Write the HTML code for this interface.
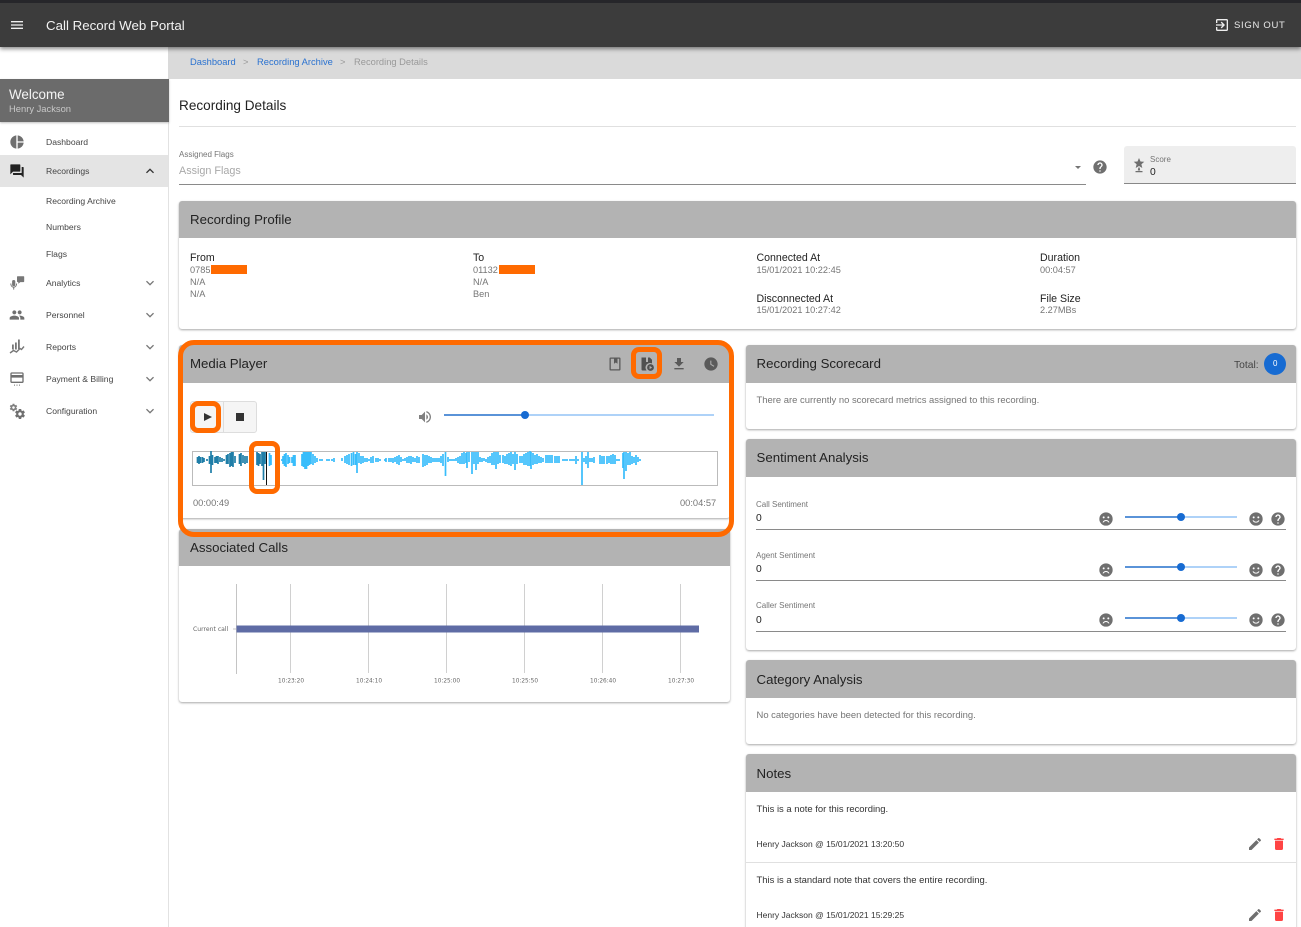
<!DOCTYPE html>
<html><head><meta charset="utf-8"><title>Call Record Web Portal</title>
<style>
html,body{margin:0;padding:0;background:#fff}
#p{position:relative;width:1301px;height:927px;overflow:hidden;background:#fff;font-family:"Liberation Sans",sans-serif;color:#222}
#p div{position:absolute}
.t{position:absolute;white-space:nowrap;line-height:1}
.h{left:0;right:0;background:#b3b3b3;height:38px;border-radius:3px 3px 0 0}
.c{background:#fff;border-radius:3px;box-shadow:0 1px 2px rgba(0,0,0,.35)}
.ht{font-size:13.250px;color:#222}
.nav{font-size:8.600px;color:#444;left:46px}
.g{font-size:9.200px;color:#757575}
.m{font-size:9.450px;color:#757575}
.k{font-size:10.600px;color:#222}
.n{font-size:9.450px;color:#333}
.u{font-size:8.500px;color:#333}
.l{font-size:8px;color:#757575}
.b{font-size:9.350px}
svg.i{position:absolute;fill:#6f6f6f}
.o{border:5px solid #ff6a00;box-sizing:border-box;background:transparent}
</style></head><body><div id="p">
<svg width="0" height="0" style="position:absolute">
<defs>
<symbol id="menu" viewBox="0 0 24 24"><path d="M3 18h18v-2H3v2zm0-5h18v-2H3v2zm0-7v2h18V6H3z"/></symbol>
<symbol id="pie" viewBox="0 0 24 24"><path d="M11 2v20c-5.070-.5-9-4.790-9-10s3.930-9.500 9-10zm2.030 0v8.990H22c-.47-4.740-4.240-8.520-8.970-8.990zm0 11.010V22c4.740-.47 8.500-4.250 8.970-8.990h-8.970z"/></symbol>
<symbol id="forum" viewBox="0 0 24 24"><path d="M21 6h-2v9H6v2c0 .55.45 1 1 1h11l4 4V7c0-.55-.45-1-1-1zm-4 6V3c0-.55-.45-1-1-1H3c-.55 0-1 .45-1 1v14l4-4h10c.55 0 1-.45 1-1z"/></symbol>
<symbol id="less" viewBox="0 0 24 24"><path d="M12 8l-6 6 1.410 1.410L12 10.830l4.590 4.580L18 14z"/></symbol>
<symbol id="more" viewBox="0 0 24 24"><path d="M16.590 8.590L12 13.170 7.410 8.590 6 10l6 6 6-6z"/></symbol>
<symbol id="people" viewBox="0 0 24 24"><path d="M16 11c1.660 0 2.990-1.340 2.990-3S17.660 5 16 5c-1.660 0-3 1.340-3 3s1.340 3 3 3zm-8 0c1.660 0 2.990-1.340 2.990-3S9.660 5 8 5C6.340 5 5 6.340 5 8s1.340 3 3 3zm0 2c-2.330 0-7 1.170-7 3.500V19h14v-2.500c0-2.330-4.670-3.500-7-3.500zm8 0c-.29 0-.62.02-.97.05 1.160.84 1.970 1.970 1.970 3.450V19h6v-2.500c0-2.330-4.670-3.500-7-3.500z"/></symbol>
<symbol id="exit" viewBox="0 0 24 24"><path d="M10.090 15.590L11.500 17l5-5-5-5-1.410 1.410L12.670 11H3v2h9.670l-2.580 2.590zM19 3H5c-1.110 0-2 .9-2 2v4h2V5h14v14H5v-4H3v4c0 1.100.89 2 2 2h14c1.100 0 2-.9 2-2V5c0-1.100-.9-2-2-2z"/></symbol>
<symbol id="help" viewBox="0 0 24 24"><path d="M12 2C6.480 2 2 6.480 2 12s4.480 10 10 10 10-4.480 10-10S17.520 2 12 2zm1 17h-2v-2h2v2zm2.070-7.750l-.9.920C13.450 12.900 13 13.500 13 15h-2v-.5c0-1.100.45-2.100 1.170-2.830l1.240-1.260c.37-.36.59-.86.59-1.410 0-1.100-.9-2-2-2s-2 .9-2 2H8c0-2.210 1.790-4 4-4s4 1.790 4 4c0 .88-.36 1.680-.93 2.250z"/></symbol>
<symbol id="dl" viewBox="0 0 24 24"><path d="M19 9h-4V3H9v6H5l7 7 7-7zM5 18v2h14v-2H5z"/></symbol>
<symbol id="clock" viewBox="0 0 24 24"><path d="M12 2C6.500 2 2 6.500 2 12s4.500 10 10 10 10-4.500 10-10S17.500 2 12 2zm4.200 14.200L11 13V7h1.500v5.200l4.500 2.700-.8 1.300z"/></symbol>
<symbol id="vol" viewBox="0 0 24 24"><path d="M3 9v6h4l5 5V4L7 9H3zm13.500 3c0-1.770-1.020-3.290-2.500-4.030v8.050c1.480-.73 2.500-2.250 2.500-4.020zM14 3.230v2.060c2.890.86 5 3.540 5 6.710s-2.110 5.850-5 6.710v2.060c4.010-.91 7-4.490 7-8.770s-2.990-7.860-7-8.770z"/></symbol>
<symbol id="del" viewBox="0 0 24 24"><path d="M6 19c0 1.100.9 2 2 2h8c1.100 0 2-.9 2-2V7H6v12zM19 4h-3.500l-1-1h-5l-1 1H5v2h14V4z"/></symbol>
<symbol id="edit" viewBox="0 0 24 24"><path d="M3 17.250V21h3.750L17.810 9.940l-3.750-3.750L3 17.250zM20.710 7.040c.39-.39.39-1.020 0-1.410l-2.340-2.340c-.39-.39-1.020-.39-1.410 0l-1.830 1.830 3.750 3.750 1.830-1.830z"/></symbol>
<symbol id="card" viewBox="0 0 24 24"><path d="M20 2H4c-1.110 0-1.990.89-1.990 2L2 16c0 1.110.89 2 2 2h16c1.110 0 2-.89 2-2V4c0-1.110-.89-2-2-2zm0 14H4v-6h16v6zm0-10H4V4h16v2zM7.500 20.500H9V22H7.500zm3.750 0h1.500V22h-1.500zm3.750 0h1.500V22H15z"/></symbol>
<symbol id="gear" viewBox="0 0 24 24"><path d="M19.430 12.980c.04-.32.07-.64.07-.98s-.03-.66-.07-.98l2.110-1.650c.19-.15.24-.42.12-.64l-2-3.460c-.12-.22-.39-.3-.61-.22l-2.490 1c-.52-.4-1.080-.73-1.690-.98l-.38-2.650C14.460 2.180 14.250 2 14 2h-4c-.25 0-.46.18-.49.42l-.38 2.650c-.61.25-1.170.59-1.690.98l-2.490-1c-.23-.09-.49 0-.61.22l-2 3.460c-.13.22-.07.49.12.64l2.110 1.650c-.04.32-.07.65-.07.98s.03.66.07.98l-2.110 1.650c-.19.15-.24.42-.12.64l2 3.460c.12.22.39.3.61.22l2.490-1c.52.4 1.080.73 1.690.98l.38 2.650c.03.24.24.42.49.42h4c.25 0 .46-.18.49-.42l.38-2.650c.61-.25 1.170-.59 1.690-.98l2.490 1c.23.09.49 0 .61-.22l2-3.460c.12-.22.07-.49-.12-.64l-2.110-1.650zM12 15.500c-1.930 0-3.500-1.570-3.500-3.500s1.570-3.500 3.500-3.500 3.500 1.570 3.500 3.500-1.570 3.500-3.500 3.500z"/></symbol>
<symbol id="sad" viewBox="0 0 24 24"><path fill-rule="evenodd" d="M12 2a10 10 0 1 0 0 20 10 10 0 0 0 0-20zM8.500 8a1.500 1.500 0 1 1 0 3 1.500 1.500 0 0 1 0-3zm7 0a1.500 1.500 0 1 1 0 3 1.500 1.500 0 0 1 0-3zM12 13.500c2.300 0 4.300 1.300 5.200 3.500h-1.700c-.8-1.200-2-2-3.500-2s-2.700.8-3.500 2H6.800c.9-2.200 2.900-3.500 5.200-3.500z"/></symbol>
<symbol id="happy" viewBox="0 0 24 24"><path fill-rule="evenodd" d="M12 2a10 10 0 1 0 0 20 10 10 0 0 0 0-20zM8.500 8a1.500 1.500 0 1 1 0 3 1.500 1.500 0 0 1 0-3zm7 0a1.500 1.500 0 1 1 0 3 1.500 1.500 0 0 1 0-3zM12 17.500c-2.300 0-4.300-1.300-5.200-3.500h1.700c.8 1.200 2 2 3.500 2s2.700-.8 3.500-2h1.700c-.9 2.200-2.900 3.500-5.200 3.500z"/></symbol>
</defs></svg>

<!-- app bar -->
<div style="left:0;top:0;width:1301px;height:47px;background:#3c3c3c;box-shadow:0 2px 4px rgba(0,0,0,.45);z-index:5"></div>
<div style="left:0;top:0;width:1301px;height:3px;background:#26262a;z-index:5"></div>
<svg class="i" style="left:9px;top:17px;fill:#eee;z-index:6" width="16" height="16"><use href="#menu"/></svg>
<span class="t" style="left:46px;top:19px;font-size:13.300px;color:#f2f2f2;z-index:6">Call Record Web Portal</span>
<svg class="i" style="left:1214px;top:17px;fill:#eee;z-index:6" width="16" height="16"><use href="#exit"/></svg>
<span class="t" style="left:1234px;top:21px;font-size:9.500px;letter-spacing:.7px;color:#e8e8e8;z-index:6">SIGN OUT</span>

<!-- breadcrumb -->
<div style="left:168px;top:47px;width:1133px;height:32px;background:#dadada"></div>
<span class="t b" style="left:190px;top:58px;color:#2a72d0">Dashboard</span>
<span class="t b" style="left:243px;top:58px;color:#999">&gt;</span>
<span class="t b" style="left:257px;top:58px;color:#2a72d0">Recording Archive</span>
<span class="t b" style="left:340px;top:58px;color:#999">&gt;</span>
<span class="t b" style="left:354px;top:58px;color:#999">Recording Details</span>

<!-- sidebar -->
<div style="left:168px;top:79px;width:1px;height:848px;background:#e2e2e2"></div>
<div style="left:0;top:79px;width:169px;height:43px;background:#6b6b6b;box-shadow:0 1px 2px rgba(0,0,0,.25)"></div>
<span class="t" style="left:9px;top:88px;font-size:13.400px;color:#f4f4f4">Welcome</span>
<span class="t" style="left:9px;top:104px;font-size:9.400px;color:#c8c8c8">Henry Jackson</span>
<div style="left:0;top:155px;width:168px;height:32px;background:#e4e4e4"></div>
<svg class="i" style="left:9px;top:134px" width="16" height="16"><use href="#pie"/></svg>
<svg class="i" style="left:9px;top:163px;fill:#222" width="16" height="16"><use href="#forum"/></svg>
<span class="t nav" style="top:138px">Dashboard</span>
<span class="t nav" style="top:167px">Recordings</span>
<svg class="i" style="left:142px;top:163px;fill:#333" width="16" height="16"><use href="#less"/></svg>
<span class="t nav" style="top:197px">Recording Archive</span>
<span class="t nav" style="top:223px">Numbers</span>
<span class="t nav" style="top:250px">Flags</span>
<span class="t nav" style="top:279px">Analytics</span>
<span class="t nav" style="top:311px">Personnel</span>
<span class="t nav" style="top:343px">Reports</span>
<span class="t nav" style="top:375px">Payment &amp; Billing</span>
<span class="t nav" style="top:407px">Configuration</span>
<svg class="i" style="left:142px;top:275px;fill:#777" width="16" height="16"><use href="#more"/></svg>
<svg class="i" style="left:142px;top:307px;fill:#777" width="16" height="16"><use href="#more"/></svg>
<svg class="i" style="left:142px;top:339px;fill:#777" width="16" height="16"><use href="#more"/></svg>
<svg class="i" style="left:142px;top:371px;fill:#777" width="16" height="16"><use href="#more"/></svg>
<svg class="i" style="left:142px;top:403px;fill:#777" width="16" height="16"><use href="#more"/></svg>
<!-- analytics icon -->
<svg class="i" style="left:9px;top:275px;fill:#777" width="16" height="16" viewBox="0 0 16 16"><rect x="3.100" y="5" width="3.200" height="6.200" rx="1.600"/><path d="M1.800 8.500c0 2.300 1.300 3.700 2.900 3.700s2.900-1.400 2.900-3.700" fill="none" stroke="#777" stroke-width="1"/><path d="M4.200 12v2.600h1V12z"/><path d="M8.700 1.200h5.800a.7.7 0 0 1 .7.7v4.500a.7.7 0 0 1-.7.7h-3.200l-2 1.600V7.100h-.6a.7.7 0 0 1-.7-.7V1.900a.7.7 0 0 1 .7-.7z"/></svg>
<svg class="i" style="left:9px;top:307px" width="16" height="16"><use href="#people"/></svg>
<!-- reports icon -->
<svg class="i" style="left:9px;top:339px;fill:#777" width="16" height="16" viewBox="0 0 16 16"><rect x="3" y="5.500" width="1.800" height="5"/><rect x="6" y="3.500" width="1.800" height="7"/><rect x="9" y=".5" width="1.800" height="9.500"/><path d="M1 14l3.500-2.500 3 1.500 3.500-3.500 1.500 1 2.500-3" fill="none" stroke="#777" stroke-width="1.400"/></svg>
<svg class="i" style="left:9px;top:371px" width="16" height="16"><use href="#card"/></svg>
<svg class="i" style="left:9px;top:403px;fill:#808080" width="9" height="9"><use href="#gear"/></svg>
<svg class="i" style="left:14px;top:408px" width="12" height="12"><use href="#gear"/></svg>

<!-- title -->
<span class="t" style="left:179px;top:99px;font-size:13.600px;color:#222">Recording Details</span>
<div style="left:179px;top:126px;width:1117px;height:1px;background:#e0e0e0"></div>

<!-- flags -->
<span class="t l" style="left:179px;top:151px">Assigned Flags</span>
<span class="t" style="left:179px;top:165.500px;font-size:10.800px;color:#a8a8a8">Assign Flags</span>
<div style="left:179px;top:184px;width:907px;height:1px;background:#8a8a8a"></div>
<div style="left:1075px;top:166px;width:0;height:0;border-left:3px solid transparent;border-right:3px solid transparent;border-top:3px solid #757575"></div>
<svg class="i" style="left:1092px;top:159px" width="16" height="16"><use href="#help"/></svg>
<div style="left:1124px;top:146px;width:172px;height:37px;background:#eee;border-bottom:1px solid #888;border-radius:3px 3px 0 0"></div>
<svg class="i" style="left:1133px;top:158px" width="12" height="15" viewBox="0 0 12 15"><path d="M6 0l1.500 3.500 3.800.3-2.900 2.500.9 3.700L6 8 2.700 10l.9-3.700L.7 3.800l3.800-.3z"/><path d="M5.400 9.500h1.200l.6 3H4.800zM2.500 13h7v1.200h-7z"/></svg>
<span class="t l" style="left:1150px;top:155.500px">Score</span>
<span class="t" style="left:1150px;top:167.500px;font-size:10.300px;color:#222">0</span>

<!-- recording profile -->
<div class="c" style="left:179px;top:201px;width:1117px;height:128px"><div class="h" style="top:0;height:37px"></div></div>
<span class="t ht" style="left:190px;top:213px">Recording Profile</span>
<span class="t k" style="left:190px;top:253px">From</span>
<span class="t g" style="left:190px;top:266px">0785</span>
<div style="left:211px;top:265px;width:36px;height:9px;background:#ff6a00"></div>
<span class="t g" style="left:190px;top:278px">N/A</span>
<span class="t g" style="left:190px;top:290px">N/A</span>
<span class="t k" style="left:473px;top:253px">To</span>
<span class="t g" style="left:473px;top:266px">01132</span>
<div style="left:499px;top:265px;width:36px;height:9px;background:#ff6a00"></div>
<span class="t g" style="left:473px;top:278px">N/A</span>
<span class="t g" style="left:473px;top:290px">Ben</span>
<span class="t k" style="left:756.500px;top:253px">Connected At</span>
<span class="t g" style="left:756.500px;top:266px">15/01/2021 10:22:45</span>
<span class="t k" style="left:756.500px;top:294px">Disconnected At</span>
<span class="t g" style="left:756.500px;top:306px">15/01/2021 10:27:42</span>
<span class="t k" style="left:1040px;top:253px">Duration</span>
<span class="t g" style="left:1040px;top:266px">00:04:57</span>
<span class="t k" style="left:1040px;top:294px">File Size</span>
<span class="t g" style="left:1040px;top:306px">2.27MBs</span>

<!-- media player -->
<div class="c" style="left:179px;top:345px;width:551px;height:173px"><div class="h" style="top:0"></div></div>
<span class="t ht" style="left:190px;top:357px">Media Player</span>
<svg class="i" style="left:607px;top:356px;fill:#5a5a5a" width="16" height="16" viewBox="0 0 16 16"><path fill-rule="evenodd" d="M3.500 1.500h9a1 1 0 0 1 1 1v11a1 1 0 0 1-1 1h-9a1 1 0 0 1-1-1v-11a1 1 0 0 1 1-1zm.3 1.200v10.600h8.400V2.700H10.500v5L8.800 6.500 7 7.700v-5z"/></svg>
<svg class="i" style="left:639px;top:356px;fill:#505050" width="16" height="16" viewBox="0 0 16 16"><path d="M2.500 1.500H7v4.500h2V1.500h1.800L13 3.700V7.500A4.500 4.500 0 0 0 7.600 14.500H3.500a1 1 0 0 1-1-1z"/><circle cx="11.500" cy="11.500" r="3.400"/><path d="M10.600 9.900l2.500 1.600-2.500 1.600z" fill="#b3b3b3"/></svg>
<svg class="i" style="left:671px;top:356px;fill:#5a5a5a" width="16" height="16"><use href="#dl"/></svg>
<svg class="i" style="left:703px;top:356px;fill:#5a5a5a" width="16" height="16"><use href="#clock"/></svg>

<div style="left:190px;top:401px;width:65px;height:30px;background:#f5f5f5;border:1px solid #ddd;border-radius:3px"></div>
<div style="left:223px;top:402px;width:1px;height:30px;background:#ddd"></div>
<div style="left:204px;top:413px;width:0;height:0;border-left:8px solid #333;border-top:4.500px solid transparent;border-bottom:4.500px solid transparent"></div>
<div style="left:236px;top:413px;width:8px;height:8px;background:#333"></div>
<svg class="i" style="left:417px;top:409px;fill:#808080" width="16" height="16"><use href="#vol"/></svg>
<div style="left:444px;top:414px;width:81px;height:1.500px;background:#5a93d8"></div>
<div style="left:525px;top:414px;width:189px;height:1.500px;background:#aed2f8"></div>
<div style="left:521px;top:411px;width:8px;height:8px;border-radius:50%;background:#176bd2"></div>

<div style="left:192px;top:451px;width:524px;height:33px;border:1px solid #bbb"></div>
<svg style="position:absolute;left:0;top:0" width="1301" height="927" fill="none">
<path stroke="#1f7ea8" stroke-width="1.700" d="M197.500 457v6M199 456v8M200.500 457v6M202.500 457v6M204 458v4M207 459v2M209.500 456v8M211 451v22M212.500 455v10M215 457v6M216.500 456v7M218 456v8M220 457v5M222 458v4M224 459v2M226.500 455v9M228 454v10M230 453v14M231.500 452v14M233 452v15M235 456v7M239.500 454v10M241 453v13M243 455v8M245 456v8M247 456v7M257 452v13M258.500 453v13M260 454v10M262 452v14M263.500 452v28M265 452v12"/>
<path stroke="#38bdfb" stroke-width="1.700" d="M269.500 453v13M271 455v10M283 456v8M284.500 454v12M286 453v14M288 455v9M289.500 457v6M282 459v2M292 457v6M293.500 455v11M295 455v11M302 454v12M303.500 452v15M305 452v17M306.500 452v17M308 452v14M309.500 452v13M311 452v12M313 454v11M315 456v7M317 458v4M320 459v2M322 459v2M332 459v2M334 458v4M327 459v2M329 459v2M342 458v3M345 456v7M347 455v9M349 454v11M351.500 453v13M353.500 452v13M355.500 454v11M357 452v21M359 453v10M361 456v8M363 456v7M365 458v4M367 458v4M369 459v2M371 457v6M373 456v7M376 458v4M378 458v4M380 459v2M385 459v2M386 458v4M389 458v4M391 458v4M393 458v5M395 457v5M397 456v8M399 455v10M401 457v5M403 459v2M405 458v3M407 457v6M409 456v7M411 456v8M413 457v5M415 458v4M417 456v7M419 457v6M423 454v13M425 455v11M427 455v10M429 456v7M431 457v6M433 458v4M435 458v4M437 458v4M439 458v4M441 456v7M443 454v12M445.500 452v24M448 457v5M450 459v2M452 459v2M454 459v2M456 458v3M458 457v6M460 456v8M462 453v11M464 452v12M466 453v10M467 452v16M469 452v10M472 452v22M474 452v12M476 452v18M478 452v12M480 457v5M482 458v4M484 458v3M486 459v3M488 457v6M490 456v7M492 453v12M494 452v13M496 452v17M498 452v12M500 455v8M503 455v8M505 456v8M507 454v10M509 453v12M511 452v14M513 454v10M515 452v18M517 454v10M520 456v7M522 456v7M524 454v11M526 453v12M528 452v14M530 451v15M531 452v17M533 453v12M535 455v9M537 454v10M539 456v7M541 457v6M543 458v4M546 455v8M548 455v8M550 455v8M552 455v8M555 456v7M557 456v7M559 456v7M563 459v2M565 459v2M567 459v2M570 459v2M572 459v2M574 459v2M576 456v8M578 459v2M582 452v33M584 458v4M586 456v8M588 452v16M590 458v4M592 458v4M594 457v6M600 455v9M602 456v8M604 456v8M607 456v8M609 456v7M611 455v9M613 454v10M615 455v9M617 459v2M619 459v2M623 453v15M624 452v27M626 452v19M628 453v12M630 452v13M632 456v8M634 457v6M636 455v10M638 457v5M640 459v2"/>
<path stroke="#111" stroke-width="1" d="M266.500 452v33"/>
</svg>
<span class="t" style="left:193px;top:499px;font-size:9.300px;color:#757575">00:00:49</span>
<span class="t" style="left:680px;top:499px;font-size:9.300px;color:#757575">00:04:57</span>

<!-- associated calls -->
<div class="c" style="left:179px;top:529px;width:551px;height:173px"><div class="h" style="top:0;height:37px"></div></div>
<span class="t ht" style="left:190px;top:541px">Associated Calls</span>
<svg style="position:absolute;left:179px;top:575px" width="551" height="115" font-family="'DejaVu Sans','Liberation Sans',sans-serif" font-size="5.800" fill="#666">
<path stroke="#d0d0d0" d="M111.500 9v89M189.500 9v89M267.500 9v89M345.500 9v89M423.500 9v89M501.500 9v89"/>
<path stroke="#c4c4c4" d="M57.500 9v90M54 54h4"/>
<rect x="57.500" y="50.500" width="462.500" height="7" fill="#5f6ca5"/>
<text x="14" y="56" font-size="6.100">Current call</text>
<text x="99" y="107.500">10:23:20</text><text x="177" y="107.500">10:24:10</text><text x="255" y="107.500">10:25:00</text><text x="333" y="107.500">10:25:50</text><text x="411" y="107.500">10:26:40</text><text x="489" y="107.500">10:27:30</text>
</svg>

<!-- scorecard -->
<div class="c" style="left:746px;top:345px;width:550px;height:84px"><div class="h" style="top:0"></div></div>
<span class="t ht" style="left:756.500px;top:357px">Recording Scorecard</span>
<span class="t" style="left:1234px;top:361px;font-size:10.300px;color:#444">Total:</span>
<div style="left:1264px;top:353px;width:22px;height:22px;border-radius:50%;background:#176bd2"></div>
<span class="t" style="left:1273px;top:360px;font-size:8px;color:#fff">0</span>
<span class="t m" style="left:756.500px;top:395.500px">There are currently no scorecard metrics assigned to this recording.</span>

<!-- sentiment -->
<div class="c" style="left:746px;top:439px;width:550px;height:211px"><div class="h" style="top:0"></div></div>
<span class="t ht" style="left:756.500px;top:451px">Sentiment Analysis</span>

<span class="t l" style="left:756px;top:500.500px">Call Sentiment</span>
<span class="t" style="left:756px;top:513.500px;font-size:10.300px;color:#222">0</span>
<div style="left:756px;top:529px;width:530px;height:1px;background:#8a8a8a"></div>
<svg class="i" style="left:1098px;top:511px" width="16" height="16"><use href="#sad"/></svg>
<div style="left:1125px;top:516px;width:56px;height:1.500px;background:#5a93d8"></div>
<div style="left:1181px;top:516px;width:56px;height:1.500px;background:#aed2f8"></div>
<div style="left:1177px;top:513px;width:8px;height:8px;border-radius:50%;background:#176bd2"></div>
<svg class="i" style="left:1248px;top:511px" width="16" height="16"><use href="#happy"/></svg>
<svg class="i" style="left:1270px;top:511px" width="16" height="16"><use href="#help"/></svg>

<span class="t l" style="left:756px;top:551.500px">Agent Sentiment</span>
<span class="t" style="left:756px;top:564.500px;font-size:10.300px;color:#222">0</span>
<div style="left:756px;top:580px;width:530px;height:1px;background:#8a8a8a"></div>
<svg class="i" style="left:1098px;top:562px" width="16" height="16"><use href="#sad"/></svg>
<div style="left:1125px;top:566px;width:56px;height:1.500px;background:#5a93d8"></div>
<div style="left:1181px;top:566px;width:56px;height:1.500px;background:#aed2f8"></div>
<div style="left:1177px;top:563px;width:8px;height:8px;border-radius:50%;background:#176bd2"></div>
<svg class="i" style="left:1248px;top:562px" width="16" height="16"><use href="#happy"/></svg>
<svg class="i" style="left:1270px;top:562px" width="16" height="16"><use href="#help"/></svg>

<span class="t l" style="left:756px;top:601.500px">Caller Sentiment</span>
<span class="t" style="left:756px;top:615.500px;font-size:10.300px;color:#222">0</span>
<div style="left:756px;top:631px;width:530px;height:1px;background:#8a8a8a"></div>
<svg class="i" style="left:1098px;top:612px" width="16" height="16"><use href="#sad"/></svg>
<div style="left:1125px;top:617px;width:56px;height:1.500px;background:#5a93d8"></div>
<div style="left:1181px;top:617px;width:56px;height:1.500px;background:#aed2f8"></div>
<div style="left:1177px;top:614px;width:8px;height:8px;border-radius:50%;background:#176bd2"></div>
<svg class="i" style="left:1248px;top:612px" width="16" height="16"><use href="#happy"/></svg>
<svg class="i" style="left:1270px;top:612px" width="16" height="16"><use href="#help"/></svg>

<!-- category -->
<div class="c" style="left:746px;top:660px;width:550px;height:84px"><div class="h" style="top:0"></div></div>
<span class="t ht" style="left:756.500px;top:673px">Category Analysis</span>
<span class="t m" style="left:756.500px;top:711px">No categories have been detected for this recording.</span>

<!-- notes -->
<div class="c" style="left:746px;top:754px;width:550px;height:190px"><div class="h" style="top:0"></div></div>
<span class="t ht" style="left:756.500px;top:767px">Notes</span>
<span class="t n" style="left:756.500px;top:805px">This is a note for this recording.</span>
<span class="t u" style="left:756.500px;top:840px">Henry Jackson @ 15/01/2021 13:20:50</span>
<svg class="i" style="left:1247px;top:836px" width="16" height="16"><use href="#edit"/></svg>
<svg class="i" style="left:1271px;top:836px;fill:#f44" width="16" height="16"><use href="#del"/></svg>
<div style="left:746px;top:862px;width:550px;height:1px;background:#e0e0e0"></div>
<span class="t n" style="left:756.500px;top:876px">This is a standard note that covers the entire recording.</span>
<span class="t u" style="left:756.500px;top:911px">Henry Jackson @ 15/01/2021 15:29:25</span>
<svg class="i" style="left:1247px;top:907px" width="16" height="16"><use href="#edit"/></svg>
<svg class="i" style="left:1271px;top:907px;fill:#f44" width="16" height="16"><use href="#del"/></svg>

<!-- orange highlight boxes -->
<div class="o" style="left:178px;top:340px;width:556px;height:197px;border-radius:16px"></div>
<div class="o" style="left:190px;top:401px;width:31px;height:32px;border-radius:8px"></div>
<div class="o" style="left:631px;top:347px;width:31px;height:32px;border-radius:8px"></div>
<div class="o" style="left:249px;top:441px;width:31px;height:53px;border-radius:8px"></div>
</div></body></html>
